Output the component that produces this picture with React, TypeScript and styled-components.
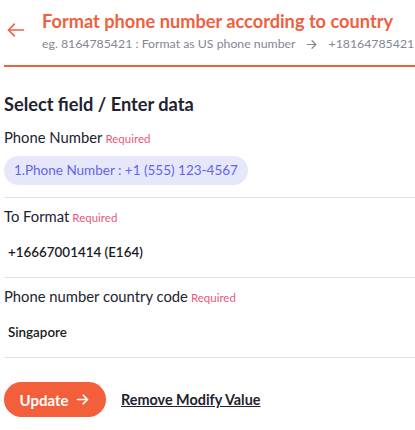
import React from "react";
import styled, { createGlobalStyle } from "styled-components";

const Global = createGlobalStyle`
  html, body { margin: 0; padding: 0; background: #fff; }
  body { font-family: Lato, "Noto Sans", sans-serif; color: #1f1f2b; }
`;

const Page = styled.div`
  width: 415px;
  display: flex;
  flex-direction: column;
  padding-left: 4px;
  box-sizing: border-box;
`;

const Header = styled.div`
  display: flex;
  align-items: flex-start;
  padding: 10px 0 0 2px;
  height: 67px;
  border-bottom: 2px solid #f0603f;
  box-sizing: border-box;
`;

const Back = styled.div`
  width: 36px;
  flex-shrink: 0;
  padding-top: 10px;
  display: flex;
`;

const HeadText = styled.div`
  display: flex;
  flex-direction: column;
  gap: 4px;
  min-width: 0;
`;

const Title = styled.div`
  color: #f0603f;
  font-size: 18.2px;
  font-weight: 700;
  line-height: 22px;
  white-space: nowrap;
`;

const Sub = styled.div`
  display: flex;
  align-items: center;
  color: #858594;
  font-size: 12.3px;
  line-height: 16px;
  white-space: nowrap;
`;

const Body = styled.div`
  padding-top: 26px;
  display: flex;
  flex-direction: column;
`;

const H2 = styled.div`
  font-size: 18.2px;
  font-weight: 700;
  line-height: 22px;
  color: #23222e;
  margin-bottom: 4px;
`;

const Field = styled.div`
  display: flex;
  flex-direction: column;
  padding: 8px 0 12px;
  border-bottom: 1.5px solid #e2e2e6;
`;

const Label = styled.div`
  font-size: 14.8px;
  line-height: 20px;
  color: #23222e;
  margin-bottom: 7px;
`;

const Req = styled.span`
  font-size: 11.5px;
  color: #e9577c;
  margin-left: 3px;
`;

const Pill = styled.div`
  align-self: flex-start;
  background: #e7e7fb;
  color: #6264ee;
  font-size: 13.5px;
  border-radius: 15px;
  height: 29px;
  line-height: 29px;
  padding: 0 10px;
`;

const Value = styled.div`
  font-size: 13.4px;
  font-weight: 600;
  color: #1a1a24;
  padding: 7px 4px 3px;
  line-height: 20px;
`;

const Actions = styled.div`
  display: flex;
  align-items: center;
  gap: 15px;
  padding-top: 24px;
`;

const Button = styled.button`
  background: #f35e3b;
  color: #fff;
  border: none;
  border-radius: 18px;
  height: 35px;
  width: 102px;
  font-family: inherit;
  font-size: 15px;
  font-weight: 700;
  display: flex;
  align-items: center;
  justify-content: center;
  gap: 7px;
  padding: 0;
`;

const LinkBtn = styled.span`
  font-size: 14.4px;
  font-weight: 700;
  color: #23222e;
  text-decoration: underline;
`;

const Arrow = ({ size, color, w }: { size: number; color: string; w: number }) => (
  <svg width={size} height={size} viewBox="0 0 24 24" fill="none" stroke={color} strokeWidth={w} strokeLinecap="round" strokeLinejoin="round">
    <path d="M21 12H3" />
    <path d="M10 19l-7-7 7-7" />
  </svg>
);

const ArrowR = ({ size, color, w }: { size: number; color: string; w: number }) => (
  <svg width={size} height={size} viewBox="0 0 24 24" fill="none" stroke={color} strokeWidth={w} strokeLinecap="round" strokeLinejoin="round">
    <path d="M4 12h16" />
    <path d="M13 5l7 7-7 7" />
  </svg>
);

const SubArrow = styled.span`
  display: inline-flex;
  margin: 0 11px 0 9px;
`;

export default function App() {
  return (
    <Page>
      <Global />
      <Header>
        <Back>
          <Arrow size={20} color="#f0603f" w={2} />
        </Back>
        <HeadText>
          <Title>Format phone number according to country</Title>
          <Sub>
            eg. 8164785421 : Format as US phone number
            <SubArrow><ArrowR size={13} color="#858594" w={2.2} /></SubArrow>
            +18164785421
          </Sub>
        </HeadText>
      </Header>
      <Body>
        <H2>Select field / Enter data</H2>
        <Field>
          <Label>Phone Number<Req>Required</Req></Label>
          <Pill>1.Phone Number : +1 (555) 123-4567</Pill>
        </Field>
        <Field>
          <Label>To Format<Req>Required</Req></Label>
          <Value>+16667001414 (E164)</Value>
        </Field>
        <Field>
          <Label>Phone number country code<Req>Required</Req></Label>
          <Value>Singapore</Value>
        </Field>
        <Actions>
          <Button>Update<ArrowR size={15} color="#fff" w={2.4} /></Button>
          <LinkBtn>Remove Modify Value</LinkBtn>
        </Actions>
      </Body>
    </Page>
  );
}
